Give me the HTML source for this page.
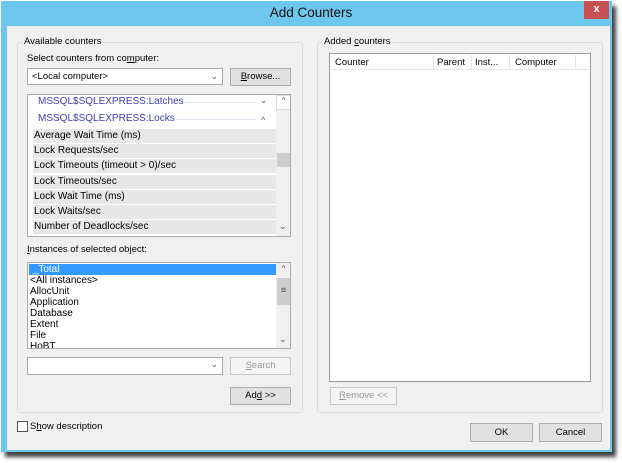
<!DOCTYPE html>
<html><head><meta charset="utf-8"><style>
*{box-sizing:border-box;margin:0;padding:0}
body{width:622px;height:463px;background:#fff;position:relative;overflow:hidden;font-family:"Liberation Sans",sans-serif;font-size:9.5px;color:#000}
.a{position:absolute}
.win{left:1px;top:1px;width:611px;height:451px;background:#6dc7ec;box-shadow:4px 5px 4px rgba(0,0,0,.75)}
.client{left:7px;top:26px;width:603px;height:424px;background:#f0f0f0}
.grp{border:1px solid #dcdcdc;border-radius:3px}
.lbl{background:#f0f0f0;padding:0 2px;white-space:nowrap}
.btn{background:#e1e1e1;border:1px solid #adadad;text-align:center;line-height:15px;white-space:nowrap}
.dis{background:#f4f4f4;border:1px solid #c8c8c8;color:#9a9a9a}
.box{background:#fff;border:1px solid #aaa}
.row{left:5px;width:243px;height:14px;background:#e8e8e8;line-height:14px;padding-left:1px;white-space:nowrap;font-size:10px}
.it{left:2px;line-height:11px;white-space:nowrap;font-size:10px}
.chev{font-size:9px;color:#555}
</style></head><body>
<div class="a win"></div>
<div class="a" style="left:0;top:5px;width:622px;text-align:center;font-size:13.5px;color:#111">Add Counters</div>
<div class="a" style="left:584px;top:1px;width:25px;height:18px;background:#c75050;color:#fff;text-align:center;font-weight:bold;font-size:11px;line-height:17px">x</div>
<div class="a client"></div>

<div class="a grp" style="left:17px;top:42px;width:286px;height:371px"></div>
<div class="a lbl" style="left:22px;top:36px">Available counters</div>
<div class="a" style="left:27px;top:53px">Select counters from co<u>m</u>puter:</div>
<div class="a box" style="left:27px;top:68px;width:196px;height:17px;padding-left:4px;line-height:15px">&lt;Local computer&gt;<span class="a chev" style="right:4px;top:0">&#8964;</span></div>
<div class="a btn" style="left:230px;top:68px;width:61px;height:18px"><u>B</u>rowse...</div>

<div class="a box" style="left:27px;top:94px;width:264px;height:143px;overflow:hidden">
 <div class="a" style="left:10px;top:1px;color:#3c3cb4;font-size:10px;white-space:nowrap">MSSQL$SQLEXPRESS:Latches</div>
 <div class="a" style="left:156px;top:7px;width:72px;height:1px;background:#dde6f0"></div>
 <div class="a chev" style="left:232px;top:0">&#8964;</div>
 <div class="a" style="left:10px;top:18px;color:#3c3cb4;font-size:10px;white-space:nowrap">MSSQL$SQLEXPRESS:Locks</div>
 <div class="a" style="left:148px;top:24px;width:80px;height:1px;background:#dde6f0"></div>
 <div class="a chev" style="left:233px;top:20px">^</div>
 <div class="a row" style="top:34px">Average Wait Time (ms)</div>
 <div class="a row" style="top:49px">Lock Requests/sec</div>
 <div class="a row" style="top:64px">Lock Timeouts (timeout &gt; 0)/sec</div>
 <div class="a row" style="top:80px">Lock Timeouts/sec</div>
 <div class="a row" style="top:95px">Lock Wait Time (ms)</div>
 <div class="a row" style="top:110px">Lock Waits/sec</div>
 <div class="a row" style="top:125px">Number of Deadlocks/sec</div>
 <div class="a" style="left:248px;top:0;width:15px;height:141px;background:#f0f0f0"></div>
 <div class="a" style="left:248px;top:0;width:15px;height:15px;background:#fff;border:1px solid #ddd;text-align:center;font-size:8px;color:#555">^</div>
 <div class="a" style="left:249px;top:58px;width:13px;height:14px;background:#cdcdcd"></div>
 <div class="a chev" style="left:251px;top:126px">&#8964;</div>
</div>

<div class="a" style="left:27px;top:244px"><u>I</u>nstances of selected object:</div>
<div class="a box" style="left:27px;top:262px;width:264px;height:87px;overflow:hidden">
 <div class="a" style="left:1px;top:1px;width:247px;height:11px;background:#3399ff"></div>
 <div class="a it" style="top:1px;color:#fff">&nbsp;_Total</div>
 <div class="a it" style="top:12px">&lt;All instances&gt;</div>
 <div class="a it" style="top:23px">AllocUnit</div>
 <div class="a it" style="top:34px">Application</div>
 <div class="a it" style="top:45px">Database</div>
 <div class="a it" style="top:56px">Extent</div>
 <div class="a it" style="top:67px">File</div>
 <div class="a it" style="top:78px">HoBT</div>
 <div class="a" style="left:248px;top:0;width:15px;height:85px;background:#f0f0f0"></div>
 <div class="a" style="left:249px;top:1px;text-align:center;width:13px;font-size:8px;color:#555">^</div>
 <div class="a" style="left:249px;top:15px;width:13px;height:27px;background:#cdcdcd;text-align:center;line-height:25px;color:#555">&#8801;</div>
 <div class="a chev" style="left:251px;top:71px">&#8964;</div>
</div>
<div class="a box" style="left:27px;top:357px;width:196px;height:18px"><span class="a chev" style="right:4px;top:1px">&#8964;</span></div>
<div class="a btn dis" style="left:230px;top:357px;width:61px;height:18px"><u>S</u>earch</div>
<div class="a btn" style="left:230px;top:387px;width:61px;height:18px">Ad<u>d</u> &gt;&gt;</div>

<div class="a" style="left:17px;top:421px;width:11px;height:11px;background:#fff;border:1px solid #555"></div>
<div class="a" style="left:30px;top:421px">S<u>h</u>ow description</div>

<div class="a grp" style="left:317px;top:42px;width:286px;height:371px"></div>
<div class="a lbl" style="left:322px;top:36px">Added <u>c</u>ounters</div>
<div class="a box" style="left:329px;top:53px;width:262px;height:329px;border-color:#999">
 <div class="a" style="left:0;top:0;width:260px;height:16px;background:#fff;border-bottom:1px solid #e5e5e5"></div>
 <div class="a" style="left:5px;top:3px">Counter</div>
 <div class="a" style="left:103px;top:1px;width:1px;height:14px;background:#e5e5e5"></div>
 <div class="a" style="left:107px;top:3px">Parent</div>
 <div class="a" style="left:141px;top:1px;width:1px;height:14px;background:#e5e5e5"></div>
 <div class="a" style="left:145px;top:3px">Inst...</div>
 <div class="a" style="left:179px;top:1px;width:1px;height:14px;background:#e5e5e5"></div>
 <div class="a" style="left:185px;top:3px">Computer</div>
 <div class="a" style="left:245px;top:1px;width:1px;height:14px;background:#e5e5e5"></div>
</div>
<div class="a btn dis" style="left:330px;top:387px;width:67px;height:18px"><u>R</u>emove &lt;&lt;</div>

<div class="a btn" style="left:470px;top:423px;width:63px;height:19px;line-height:17px">OK</div>
<div class="a btn" style="left:539px;top:423px;width:63px;height:19px;line-height:17px">Cancel</div>
</body></html>
